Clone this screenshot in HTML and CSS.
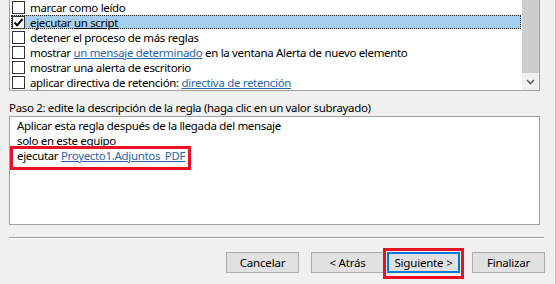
FILE: index.html
```html
<!DOCTYPE html>
<html lang="es">
<head>
    <meta charset="UTF-8">
    <title>Asistente para reglas</title>
    <link rel="stylesheet" href="styles.css">
</head>
<body>
<div class="dialog">

    <!-- Paso 1: acciones -->
    <div class="actions">
        <div class="action-rows">
            <div class="row"><span class="check"></span><span>marcar como leído</span></div>
            <div class="row selected">
                <span class="check">
                    <svg width="11" height="11" viewBox="0 0 11 11"><path d="M1.5 5.5 L4.2 8.3 L9.5 2" fill="none" stroke="#000" stroke-width="2"/></svg>
                </span>
                <span>ejecutar <u>un script</u></span>
            </div>
            <div class="row"><span class="check"></span><span>detener el proceso de más reglas</span></div>
            <div class="row"><span class="check"></span><span>mostrar <a href="#">un mensaje determinado</a> en la ventana Alerta de nuevo elemento</span></div>
            <div class="row"><span class="check"></span><span>mostrar una alerta de escritorio</span></div>
            <div class="row"><span class="check"></span><span>aplicar directiva de retención: <a href="#">directiva de retención</a></span></div>
        </div>
        <div class="scrollbar">
            <div class="thumb"></div>
            <div class="arrow">
                <svg width="9" height="6" viewBox="0 0 9 6"><path d="M1 1 L4.5 4.5 L8 1" fill="none" stroke="#606060" stroke-width="1.6"/></svg>
            </div>
        </div>
    </div>

    <!-- Paso 2: descripción -->
    <div class="step-label">Paso 2: edite la descripción de la regla (haga clic en un valor subrayado)</div>
    <div class="description">
        <div>Aplicar esta regla después de la llegada del mensaje</div>
        <div>solo en este equipo</div>
        <div><span class="marked">ejecutar <a href="#">Proyecto1.Adjuntos_PDF</a></span></div>
    </div>

    <div class="separator"></div>

    <div class="buttons">
        <button>Cancelar</button>
        <div class="nav">
            <button>&lt; Atrás</button>
            <span class="marked-btn"><button class="default">Siguiente &gt;</button></span>
        </div>
        <button>Finalizar</button>
    </div>

</div>
</body>
</html>
```

FILE: styles.css
```css
body {
    margin: 0;
    background-color: #f0f0f0;
    font-family: "Noto Sans", "Open Sans", sans-serif;
    font-size: 11.5px;
    letter-spacing: -0.33px;
    color: #000;
    overflow: hidden;
}
.dialog {
    width: 556px;
    height: 284px;
    border-right: 1px solid #c4c4c4;
    padding-left: 9px;
    box-sizing: border-box;
}
a {
    color: #2d64af;
}

/* Lista de acciones */
.actions {
    display: flex;
    width: 531px;
    height: 91px;
    box-sizing: border-box;
    border: 1px solid #a0a0a0;
    border-top: none;
    background: #fff;
}
.action-rows {
    flex: 1;
}
.row {
    display: flex;
    align-items: center;
    height: 15px;
    margin: 0 1px;
    white-space: nowrap;
    box-sizing: border-box;
}
.row.selected {
    background: #a6ceee;
    border: 1px dotted #222;
    height: 14px;
    margin-bottom: 1px;
}
.check {
    display: flex;
    width: 11px;
    height: 11px;
    border: 1px solid #333;
    background: #fff;
    margin: 0 5px 0 1px;
    flex-shrink: 0;
}
.row.selected .check {
    margin-left: 0;
}
.scrollbar {
    width: 17px;
    display: flex;
    flex-direction: column;
    background: #f0f0f0;
}
.thumb {
    height: 73px;
    background: #cdcdcd;
}
.arrow {
    flex: 1;
    display: flex;
    align-items: center;
    justify-content: center;
}

/* Paso 2 */
.step-label {
    margin-top: 9px;
    height: 16px;
    line-height: 16px;
}
.description {
    width: 531px;
    height: 109px;
    box-sizing: border-box;
    border: 1px solid #a0a0a0;
    background: #fff;
    padding: 1px 7px;
    line-height: 15px;
}
.marked {
    position: relative;
}
.marked::after {
    content: "";
    position: absolute;
    left: -7px;
    right: -6px;
    top: -2px;
    bottom: -7px;
    border: 3px solid #e81123;
}

.separator {
    width: 535px;
    margin-top: 12px;
    border-top: 1px solid #a0a0a0;
    border-bottom: 1px solid #fff;
}

/* Botones */
.buttons {
    display: flex;
    gap: 12px;
    margin-top: 13px;
    padding-left: 217px;
}
.nav {
    display: flex;
    gap: 3px;
}
button {
    width: 73px;
    height: 21px;
    padding: 0;
    font-family: inherit;
    font-size: 11.5px;
    letter-spacing: -0.2px;
    color: #000;
    background: #e1e1e1;
    border: 1px solid #adadad;
}
button.default {
    border: 2px solid #0078d7;
}
.marked-btn {
    position: relative;
    display: flex;
}
.marked-btn::after {
    content: "";
    position: absolute;
    left: -4px;
    right: -4px;
    top: -4px;
    bottom: -6px;
    border: 3px solid #e81123;
}
```
